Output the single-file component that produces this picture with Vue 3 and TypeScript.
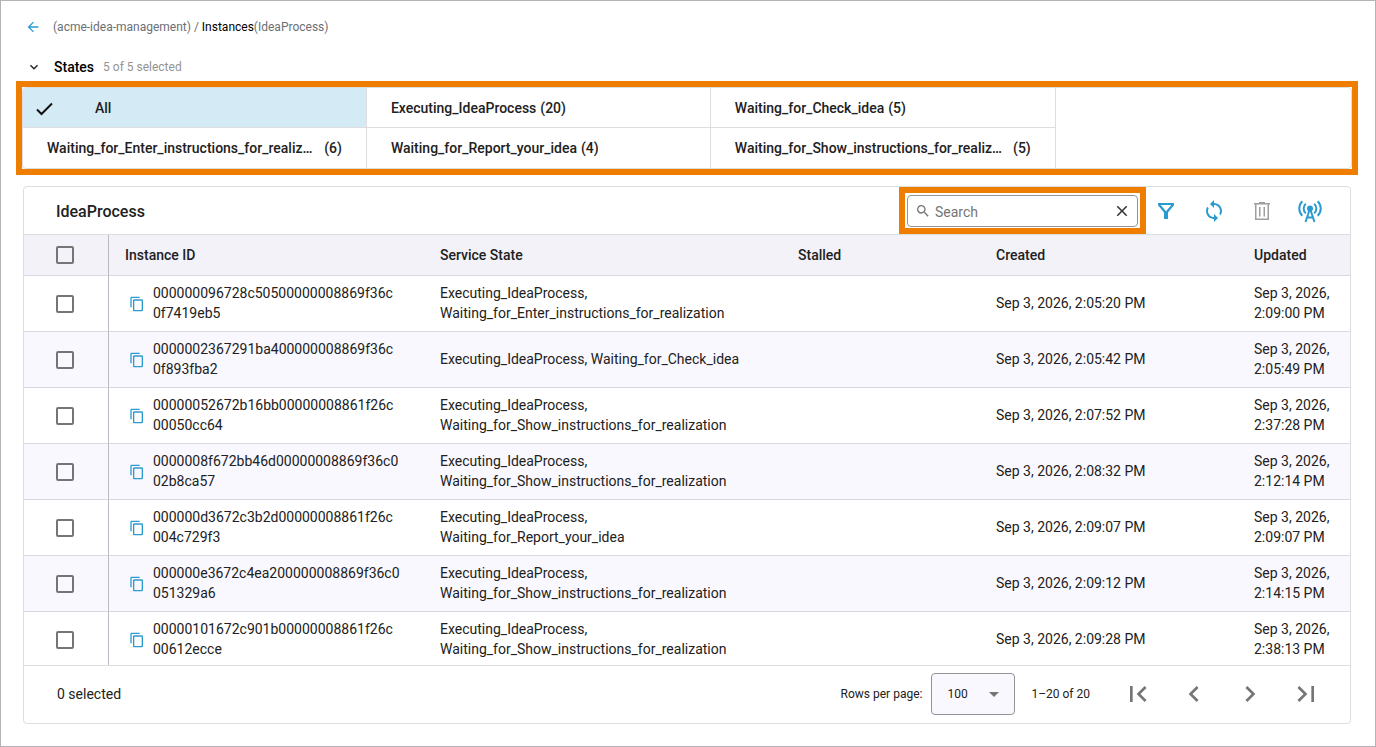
<script setup lang="ts">
import { computed, ref } from 'vue'

interface StateOption {
  name: string
  count: number
}

interface Instance {
  /** The ID in two parts; a line may break between them. */
  id: [string, string]
  states: string[]
  created: string
  updated: string
}

const stateOptions: StateOption[] = [
  { name: 'Executing_IdeaProcess', count: 20 },
  { name: 'Waiting_for_Check_idea', count: 5 },
  { name: 'Waiting_for_Enter_instructions_for_realization', count: 6 },
  { name: 'Waiting_for_Report_your_idea', count: 4 },
  { name: 'Waiting_for_Show_instructions_for_realization', count: 5 },
]

const showInstructions = 'Waiting_for_Show_instructions_for_realization'

const instances: Instance[] = [
  { id: ['000000096728c50500000008869f36c', '0f7419eb5'], states: ['Executing_IdeaProcess', 'Waiting_for_Enter_instructions_for_realization'], created: 'Sep 3, 2026, 2:05:20 PM', updated: 'Sep 3, 2026, 2:09:00 PM' },
  { id: ['0000002367291ba400000008869f36c', '0f893fba2'], states: ['Executing_IdeaProcess', 'Waiting_for_Check_idea'], created: 'Sep 3, 2026, 2:05:42 PM', updated: 'Sep 3, 2026, 2:05:49 PM' },
  { id: ['00000052672b16bb00000008861f26c', '00050cc64'], states: ['Executing_IdeaProcess', showInstructions], created: 'Sep 3, 2026, 2:07:52 PM', updated: 'Sep 3, 2026, 2:37:28 PM' },
  { id: ['0000008f672bb46d00000008869f36c0', '02b8ca57'], states: ['Executing_IdeaProcess', showInstructions], created: 'Sep 3, 2026, 2:08:32 PM', updated: 'Sep 3, 2026, 2:12:14 PM' },
  { id: ['000000d3672c3b2d00000008861f26c', '004c729f3'], states: ['Executing_IdeaProcess', 'Waiting_for_Report_your_idea'], created: 'Sep 3, 2026, 2:09:07 PM', updated: 'Sep 3, 2026, 2:09:07 PM' },
  { id: ['000000e3672c4ea200000008869f36c0', '051329a6'], states: ['Executing_IdeaProcess', showInstructions], created: 'Sep 3, 2026, 2:09:12 PM', updated: 'Sep 3, 2026, 2:14:15 PM' },
  { id: ['00000101672c901b00000008861f26c', '00612ecce'], states: ['Executing_IdeaProcess', showInstructions], created: 'Sep 3, 2026, 2:09:28 PM', updated: 'Sep 3, 2026, 2:38:13 PM' },
]

const total = 20
const expanded = ref(true)
const activeState = ref<string | null>(null)
const search = ref('')
const pageSize = ref(100)
const selected = ref<string[]>([])

const isLong = (name: string): boolean => name.length > 40
const shorten = (name: string): string => (isLong(name) ? `${name.slice(0, -5)}…` : name)
const fullId = (row: Instance): string => row.id.join('')

const visible = computed(() =>
  instances.filter(
    (i) =>
      (activeState.value === null || i.states.includes(activeState.value)) &&
      fullId(i).includes(search.value.trim()),
  ),
)

const allSelected = computed({
  get: () => visible.value.length > 0 && selected.value.length === visible.value.length,
  set: (on: boolean) => {
    selected.value = on ? visible.value.map(fullId) : []
  },
})
</script>

<template>
  <main class="page">
    <nav class="crumbs" aria-label="Breadcrumb">
      <a href="#" class="back" aria-label="Back">
        <svg width="16" height="16" viewBox="0 0 24 24"><path d="M20 11H7.83l5.59-5.59L12 4l-8 8 8 8 1.41-1.41L7.83 13H20z" /></svg>
      </a>
      <span>(acme-idea-management) / <b>Instances</b>(IdeaProcess)</span>
    </nav>

    <button type="button" class="states-head" :aria-expanded="expanded" @click="expanded = !expanded">
      <svg width="16" height="16" viewBox="0 0 24 24"><path d="M7.41 8.59 12 13.17l4.59-4.58L18 10l-6 6-6-6z" /></svg>
      <span class="states-title">States</span>
      <span class="states-count">5 of 5 selected</span>
    </button>

    <section v-if="expanded" class="highlight" aria-label="States">
      <div class="states">
        <button type="button" class="state" :class="{ active: activeState === null }" :aria-pressed="activeState === null" @click="activeState = null">
          <svg class="tick" width="20" height="20" viewBox="0 0 20 20"><path d="M2 11.5 6.500 16 17 5.500" /></svg>
          <span class="all">All</span>
        </button>
        <button
          v-for="option in stateOptions"
          :key="option.name"
          type="button"
          class="state"
          :class="{ long: isLong(option.name) }"
          :title="option.name"
          :aria-pressed="activeState === option.name"
          @click="activeState = option.name"
        >
          <span>{{ shorten(option.name) }}</span>
          <span>({{ option.count }})</span>
        </button>
      </div>
    </section>

    <section class="card">
      <header class="toolbar">
        <h1>IdeaProcess</h1>
        <div class="highlight search-highlight">
          <div class="search">
            <svg width="16" height="16" viewBox="0 0 24 24"><path d="M15.5 14h-.79l-.28-.27A6.47 6.47 0 0 0 16 9.5 6.5 6.5 0 1 0 9.5 16c1.61 0 3.09-.59 4.23-1.57l.27.28v.79l5 4.99L20.490 19zm-6 0C7.01 14 5 11.99 5 9.5S7.01 5 9.5 5 14 7.01 14 9.5 11.990 14 9.500 14z" /></svg>
            <input v-model="search" type="text" placeholder="Search" aria-label="Search" />
            <button type="button" class="clear" aria-label="Clear search" @click="search = ''">
              <svg width="18" height="18" viewBox="0 0 24 24"><path d="M19 6.41 17.59 5 12 10.59 6.41 5 5 6.41 10.59 12 5 17.59 6.41 19 12 13.41 17.59 19 19 17.59 13.410 12z" /></svg>
            </button>
          </div>
        </div>
        <div class="tools">
          <button type="button" class="tool" aria-label="Filter">
            <svg width="24" height="24" viewBox="0 0 24 24"><path fill-rule="evenodd" d="M4 4h16v2.3l-6 7.2V20h-4v-6.500L4 6.300zM6.700 6l5.300 6.200L17.300 6z" /></svg>
          </button>
          <button type="button" class="tool" aria-label="Refresh">
            <svg width="24" height="24" viewBox="0 0 24 24"><path d="M12 4V1L8 5l4 4V6c3.31 0 6 2.69 6 6 0 1.01-.25 1.97-.7 2.8l1.46 1.46A7.93 7.93 0 0 0 20 12c0-4.42-3.58-8-8-8zm0 14c-3.31 0-6-2.69-6-6 0-1.01.25-1.97.7-2.8L5.24 7.74A7.93 7.93 0 0 0 4 12c0 4.42 3.58 8 8 8v3l4-4-4-4z" /></svg>
          </button>
          <button type="button" class="tool" aria-label="Delete" disabled>
            <svg width="24" height="24" viewBox="0 0 24 24"><path fill-rule="evenodd" d="M4 4h5V3h6v1h5v1.500h-1V21H5V5.500H4zM6.500 5.500v14h11v-14zM9 8h1.500v9.500H9zM13.500 8H15v9.500h-1.500z" /></svg>
          </button>
          <button type="button" class="tool" aria-label="Live updates">
            <svg width="24" height="24" viewBox="0 0 24 24">
              <circle cx="12" cy="9.500" r="3" />
              <g class="line">
                <path d="M11.500 11 7.500 23M12.500 11l4 12M9.500 18.500h5" />
                <path d="M7.800 4.800a6.200 6.200 0 0 0 0 9.400M16.200 4.800a6.200 6.200 0 0 1 0 9.400" />
                <path d="M4.300 2.200a10.300 10.300 0 0 0 0 14.600M19.700 2.200a10.300 10.300 0 0 1 0 14.600" />
              </g>
            </svg>
          </button>
        </div>
      </header>

      <div class="scroller">
        <table>
          <colgroup>
            <col class="c-check" />
            <col class="c-id" />
            <col class="c-state" />
            <col class="c-stalled" />
            <col class="c-created" />
            <col class="c-updated" />
          </colgroup>
          <thead>
            <tr>
              <th class="check"><input v-model="allSelected" type="checkbox" aria-label="Select all" /></th>
              <th>Instance ID</th>
              <th>Service State</th>
              <th>Stalled</th>
              <th>Created</th>
              <th>Updated</th>
            </tr>
          </thead>
          <tbody>
            <tr v-for="row in visible" :key="fullId(row)">
              <td class="check"><input v-model="selected" type="checkbox" :value="fullId(row)" :aria-label="`Select ${fullId(row)}`" /></td>
              <td>
                <div class="id">
                  <button type="button" class="copy" aria-label="Copy instance ID">
                    <svg width="16" height="16" viewBox="0 0 24 24"><path d="M16 1H4c-1.100 0-2 .9-2 2v14h2V3h12zm3 4H8c-1.100 0-2 .9-2 2v14c0 1.100.9 2 2 2h11c1.100 0 2-.9 2-2V7c0-1.100-.9-2-2-2zm0 16H8V7h11z" /></svg>
                  </button>
                  <span>{{ row.id[0] }}<wbr />{{ row.id[1] }}</span>
                </div>
              </td>
              <td>{{ row.states.join(', ') }}</td>
              <td></td>
              <td>{{ row.created }}</td>
              <td>{{ row.updated }}</td>
            </tr>
          </tbody>
        </table>
      </div>

      <footer class="footer">
        <span class="selected">{{ selected.length }} selected</span>
        <label for="page-size" class="small">Rows per page:</label>
        <div class="select">
          <select id="page-size" v-model="pageSize">
            <option :value="25">25</option>
            <option :value="50">50</option>
            <option :value="100">100</option>
          </select>
          <svg width="10" height="5" viewBox="0 0 10 5"><path d="M0 0h10L5 5z" /></svg>
        </div>
        <span class="small">1–{{ total }} of {{ total }}</span>
        <div class="pager">
          <button type="button" aria-label="First page">
            <svg width="32" height="32" viewBox="0 0 24 24"><path d="M18.410 16.590 13.820 12l4.590-4.590L17 6l-6 6 6 6zM6 6h2v12H6z" /></svg>
          </button>
          <button type="button" aria-label="Previous page">
            <svg width="32" height="32" viewBox="0 0 24 24"><path d="M15.410 7.410 14 6l-6 6 6 6 1.410-1.410L10.830 12z" /></svg>
          </button>
          <button type="button" aria-label="Next page">
            <svg width="32" height="32" viewBox="0 0 24 24"><path d="M10 6 8.590 7.410 13.170 12l-4.580 4.590L10 18l6-6z" /></svg>
          </button>
          <button type="button" aria-label="Last page">
            <svg width="32" height="32" viewBox="0 0 24 24"><path d="M5.590 7.410 10.180 12l-4.590 4.590L7 18l6-6-6-6zM16 6h2v12h-2z" /></svg>
          </button>
        </div>
      </footer>
    </section>
  </main>
</template>

<style>
body {
  background: #fff;
}
</style>

<style scoped>
* {
  box-sizing: border-box;
}

.page {
  display: flex;
  flex-direction: column;
  height: 100vh;
  padding: 16px 17px 22px 15px;
  border: 1px solid #b4b2b4;
  color: #212121;
  font: 400 14px/20px Roboto, sans-serif;
}

button,
input,
select {
  margin: 0;
  font: inherit;
  color: inherit;
}

button {
  padding: 0;
  border: 0;
  background: none;
  text-align: left;
  cursor: pointer;
}

svg {
  display: block;
  flex: none;
  fill: currentColor;
}

.crumbs {
  display: flex;
  align-items: center;
  gap: 12px;
  padding-left: 9px;
  color: #6b6f76;
  font-size: 12px;
}

.crumbs b {
  color: #000;
  font-weight: 400;
}

.back {
  color: #2a9bd0;
}

.states-head {
  display: flex;
  align-items: center;
  align-self: flex-start;
  margin: 20px 0 4px;
  padding-left: 10px;
}

.states-title {
  margin-left: 12px;
  color: #000;
  font-weight: 500;
}

.states-count {
  margin-left: 9px;
  color: #949494;
  font-size: 12px;
}

.highlight {
  border: 6px solid #ef7d00;
}

.states {
  display: grid;
  grid-template-columns: 344fr 344fr 345fr;
  padding-right: 22.2%;
  border: 1px solid #dedede;
  border-radius: 4px;
}

.state {
  display: flex;
  align-items: center;
  gap: 4px;
  min-width: 0;
  height: 40px;
  padding: 0 24px;
  border-right: 1px solid #dedede;
  font-weight: 500;
  white-space: nowrap;
}

.state.long {
  justify-content: space-between;
}

.state:nth-child(-n + 3) {
  border-bottom: 1px solid #dedede;
}

.state.active {
  padding-left: 12px;
  background: #d4eaf5;
}

.tick {
  fill: none;
  stroke: #111;
  stroke-width: 2;
}

.all {
  margin-left: 36px;
}

.card {
  display: flex;
  flex: 1;
  flex-direction: column;
  min-height: 0;
  margin: 11px 7px 0;
  border: 1px solid #dedede;
  border-radius: 4px;
}

.toolbar {
  display: flex;
  align-items: center;
  padding: 0 20px 0 32px;
}

h1 {
  flex: 1;
  margin: 0;
  padding-top: 2px;
  font-size: 16px;
  font-weight: 500;
}

.search-highlight {
  padding: 2px 2px 1px;
}

.search {
  display: flex;
  align-items: center;
  width: 231px;
  height: 32px;
  padding: 0 6px 0 7px;
  border: 1px solid #949494;
  border-radius: 4px;
  color: #757575;
}

.search input {
  flex: 1;
  min-width: 0;
  padding: 2px 0 0 4px;
  border: 0;
  outline: 0;
  background: none;
}

.search input::placeholder {
  color: #757575;
}

.clear {
  color: #333;
}

.tools {
  display: flex;
  gap: 8px;
}

.tool {
  display: grid;
  place-items: center;
  width: 40px;
  height: 40px;
  color: #2a9bd0;
}

.tool:disabled {
  color: #9e9e9e;
}

.line {
  fill: none;
  stroke: currentColor;
  stroke-width: 2;
}

.scroller {
  flex: 1;
  min-height: 0;
  overflow: auto;
  border-top: 1px solid #dedede;
  border-bottom: 1px solid #dedede;
  scrollbar-width: none;
}

table {
  width: 100%;
  table-layout: fixed;
  border-collapse: separate;
  border-spacing: 0;
}

.c-check {
  width: 85px;
}

.c-id {
  width: 315px;
}

.c-state {
  width: 358px;
}

.c-stalled {
  width: 198px;
}

.c-created {
  width: 258px;
}

.c-updated {
  width: 112px;
}

th,
td {
  padding: 0 16px;
  border-bottom: 1px solid #d8d8e0;
  text-align: left;
}

th {
  height: 41px;
  background: #f3f2f9;
  font-weight: 500;
}

td {
  height: 56px;
  padding-bottom: 2px;
}

tbody tr:nth-child(even) {
  background: #f9f8ff;
}

.check {
  padding-bottom: 0;
  padding-left: 32px;
  border-right: 1px solid #bab9c4;
}

.check input {
  display: block;
  width: 18px;
  height: 18px;
  appearance: none;
  border: 2px solid #757575;
  border-radius: 2px;
}

.check input:checked {
  border-color: #2a9bd0;
  background: #2a9bd0;
}

.id {
  display: flex;
  align-items: center;
  gap: 8px;
  padding-left: 4px;
}

.copy {
  padding-top: 2px;
  color: #2a9bd0;
}

.footer {
  display: flex;
  align-items: center;
  padding: 7px 24px 8px 33px;
}

.selected {
  flex: 1;
}

.small {
  font-size: 12px;
}

.select {
  display: grid;
  align-items: center;
  margin: 0 16px 0 9px;
}

.select select,
.select svg {
  grid-area: 1 / 1;
}

.select select {
  width: 84px;
  height: 42px;
  padding: 0 15px;
  appearance: none;
  border: 1px solid #949494;
  border-radius: 4px;
  background: #f9f8ff;
  font-size: 12px;
}

.select svg {
  justify-self: end;
  margin-right: 16px;
  color: #757575;
  pointer-events: none;
}

.pager {
  display: flex;
  gap: 16px;
  margin-left: 28px;
}

.pager button {
  display: grid;
  place-items: center;
  width: 40px;
  height: 40px;
  color: #757575;
}
</style>
